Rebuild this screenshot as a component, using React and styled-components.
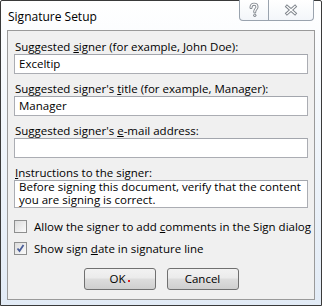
import styled, { createGlobalStyle } from "styled-components";

const Global = createGlobalStyle`
  html, body {
    margin: 0;
    padding: 0;
    background: #ffffff;
  }
  * {
    box-sizing: border-box;
  }
`;

const Window = styled.div`
  width: 322px;
  height: 306px;
  border: 1px solid #3a3a3a;
  border-radius: 2px 2px 0 0;
  background: linear-gradient(to bottom, #ffffff 0%, #f4f8fc 30%, #e2ebf6 100%);
  display: flex;
  flex-direction: column;
  font-family: "Open Sans", "Noto Sans", sans-serif;
  font-size: 11.5px;
  color: #000;
`;

const TitleBar = styled.div`
  height: 29px;
  display: flex;
  align-items: flex-start;
  justify-content: space-between;
  padding-left: 7px;
`;

const Title = styled.div`
  padding-top: 7px;
  font-size: 12px;
  color: #000;
`;

const Caption = styled.div`
  display: flex;
  margin-right: 7px;
  margin-top: -1px;
`;

const CapButton = styled.div`
  width: ${(p) => p.w}px;
  height: 21px;
  border: 1px solid #9aa3ae;
  border-top: none;
  border-left: ${(p) => (p.first ? "1px solid #9aa3ae" : "none")};
  border-radius: ${(p) => (p.first ? "0 0 0 4px" : "0 0 4px 0")};
  background: linear-gradient(to bottom, #ffffff, #f3f6fa);
  display: flex;
  align-items: center;
  justify-content: center;
`;

const Panel = styled.div`
  flex: 1;
  margin: 0 6px 5px 6px;
  border: 1px solid #9a9a9a;
  background: #f0f0f0;
  padding: 9px 6px 9px 6px;
  display: flex;
  flex-direction: column;
`;

const Label = styled.div`
  height: 14px;
  line-height: 13px;
  padding-left: 1px;
  margin-top: ${(p) => (p.first ? 0 : 8)}px;
  white-space: nowrap;
`;

const Field = styled.div`
  height: ${(p) => (p.tall ? 28 : 20)}px;
  border: 1px solid #abadb3;
  border-top-color: #a3a6ad;
  background: #fff;
  padding: ${(p) => (p.tall ? "0 4px" : "0 4px")};
  line-height: ${(p) => (p.tall ? "12.5px" : "18px")};
  overflow: hidden;
  white-space: ${(p) => (p.tall ? "normal" : "nowrap")};
`;

const CheckRow = styled.div`
  display: flex;
  align-items: center;
  height: 13px;
  margin-top: ${(p) => p.top}px;
  gap: 7px;
  white-space: nowrap;
`;

const Box = styled.div`
  width: 13px;
  height: 13px;
  border: 1px solid #8e8f8f;
  background: linear-gradient(135deg, #dcdcdc, #fbfbfb);
  display: flex;
  align-items: center;
  justify-content: center;
  flex-shrink: 0;
`;

const Buttons = styled.div`
  display: flex;
  justify-content: center;
  gap: 11px;
  margin-top: 13px;
`;

const Button = styled.div`
  width: 72px;
  height: 22px;
  border: 1px solid #707070;
  border-radius: 3px;
  background: linear-gradient(to bottom, #f2f2f2 0%, #ebebeb 45%, #dddddd 50%, #cfcfcf 100%);
  display: flex;
  align-items: center;
  justify-content: center;
  line-height: 20px;
`;

const Dot = styled.span`
  width: 2px;
  height: 2px;
  background: #e02020;
  margin-left: 2px;
  margin-top: 4px;
`;

function QuestionIcon() {
  const d = "M5 5.5 C5 3.2 6.3 2.2 8 2.2 C9.8 2.2 11 3.2 11 5 C11 6.8 8.8 7.3 8.8 9.3 L8.8 10";
  return (
    <svg width="16" height="16" viewBox="0 0 16 16">
      <path d={d} fill="none" stroke="#7d838b" strokeWidth="3" strokeLinecap="round" />
      <path d={d} fill="none" stroke="#fff" strokeWidth="1.2" strokeLinecap="round" />
      <circle cx="8.8" cy="13.3" r="1.6" fill="#7d838b" />
      <circle cx="8.8" cy="13.3" r="0.7" fill="#fff" />
    </svg>
  );
}

function CloseIcon() {
  const d = "M4 3.5 L12 10.5 M12 3.5 L4 10.5";
  return (
    <svg width="16" height="14" viewBox="0 0 16 14">
      <path d={d} fill="none" stroke="#7d838b" strokeWidth="3.2" strokeLinecap="square" />
      <path d={d} fill="none" stroke="#fff" strokeWidth="1.3" strokeLinecap="square" />
    </svg>
  );
}

function Check() {
  return (
    <svg width="11" height="11" viewBox="0 0 11 11">
      <path d="M2.5 5.5 L4.5 8 L8.5 2" fill="none" stroke="#4a5e99" strokeWidth="1.8" />
    </svg>
  );
}

export default function App() {
  return (
    <>
      <Global />
      <Window>
        <TitleBar>
          <Title>Signature Setup</Title>
          <Caption>
            <CapButton w={30} first>
              <QuestionIcon />
            </CapButton>
            <CapButton w={45}>
              <CloseIcon />
            </CapButton>
          </Caption>
        </TitleBar>
        <Panel>
          <Label first>
            Suggested <u>s</u>igner (for example, John Doe):
          </Label>
          <Field>Exceltip</Field>
          <Label>
            Suggested signer's <u>t</u>itle (for example, Manager):
          </Label>
          <Field>Manager</Field>
          <Label>
            Suggested signer's <u>e</u>-mail address:
          </Label>
          <Field />
          <Label>
            <u>I</u>nstructions to the signer:
          </Label>
          <Field tall>
            Before signing this document, verify that the content you are signing is correct.
          </Field>
          <CheckRow top={12}>
            <Box />
            <span>
              Allow the signer to add <u>c</u>omments in the Sign dialog
            </span>
          </CheckRow>
          <CheckRow top={9}>
            <Box>
              <Check />
            </Box>
            <span>
              Show sign <u>d</u>ate in signature line
            </span>
          </CheckRow>
          <Buttons>
            <Button>
              OK
              <Dot />
            </Button>
            <Button>Cancel</Button>
          </Buttons>
        </Panel>
      </Window>
    </>
  );
}
